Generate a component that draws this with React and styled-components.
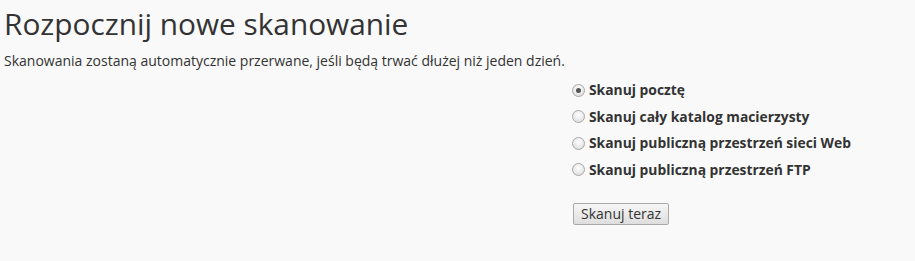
import React from "react";
import styled, { createGlobalStyle } from "styled-components";

const Global = createGlobalStyle`
  html, body { margin: 0; padding: 0; background: #f9f9f9; }
  body { font-family: "Open Sans", "Liberation Sans", sans-serif; color: #333; }
`;

const Page = styled.div`
  padding: 0 4px;
  height: 261px;
  box-sizing: border-box;
`;

const Title = styled.h1`
  margin: 0;
  padding-top: 4px;
  font-size: 29.8px;
  font-weight: 400;
  line-height: 40px;
  color: #333;
`;

const Note = styled.p`
  margin: 7px 0 0;
  font-size: 14px;
  line-height: 20px;
  color: #333;
`;

const Form = styled.form`
  margin: 9px 0 0 568px;
  display: flex;
  flex-direction: column;
`;

const Options = styled.div`
  display: flex;
  flex-direction: column;
  gap: 6.5px;
`;

const Option = styled.label`
  display: flex;
  align-items: center;
  gap: 4px;
  font-size: 13.85px;
  font-weight: 700;
  line-height: 20px;
  color: #333;
`;

const Radio = styled.span`
  width: 13px;
  height: 13px;
  border-radius: 50%;
  box-sizing: border-box;
  border: 1px solid #a8a8a8;
  background: radial-gradient(circle at 50% 35%, #ffffff 0%, #d8d8d8 100%);
  display: flex;
  align-items: center;
  justify-content: center;
  &::after {
    content: "";
    width: 5px;
    height: 5px;
    border-radius: 50%;
    background: ${(p) => (p.$checked ? "#555" : "transparent")};
  }
`;

const Button = styled.button`
  align-self: flex-start;
  margin-top: 23px;
  margin-left: 1px;
  font-family: "Open Sans", "Liberation Sans", sans-serif;
  font-size: 14px;
  color: #333;
  height: 22px;
  padding: 0 7px;
  border: 1px solid #a9a9a9;
  border-radius: 2px;
  background: linear-gradient(#f6f6f6, #dedede);
  line-height: 18px;
`;

const options = [
  "Skanuj pocztę",
  "Skanuj cały katalog macierzysty",
  "Skanuj publiczną przestrzeń sieci Web",
  "Skanuj publiczną przestrzeń FTP",
];

export default function App() {
  return (
    <>
      <Global />
      <Page>
        <Title>Rozpocznij nowe skanowanie</Title>
        <Note>Skanowania zostaną automatycznie przerwane, jeśli będą trwać dłużej niż jeden dzień.</Note>
        <Form onSubmit={(e) => e.preventDefault()}>
          <Options>
            {options.map((o, i) => (
              <Option key={o}>
                <Radio $checked={i === 0} />
                {o}
              </Option>
            ))}
          </Options>
          <Button type="button">Skanuj teraz</Button>
        </Form>
      </Page>
    </>
  );
}
